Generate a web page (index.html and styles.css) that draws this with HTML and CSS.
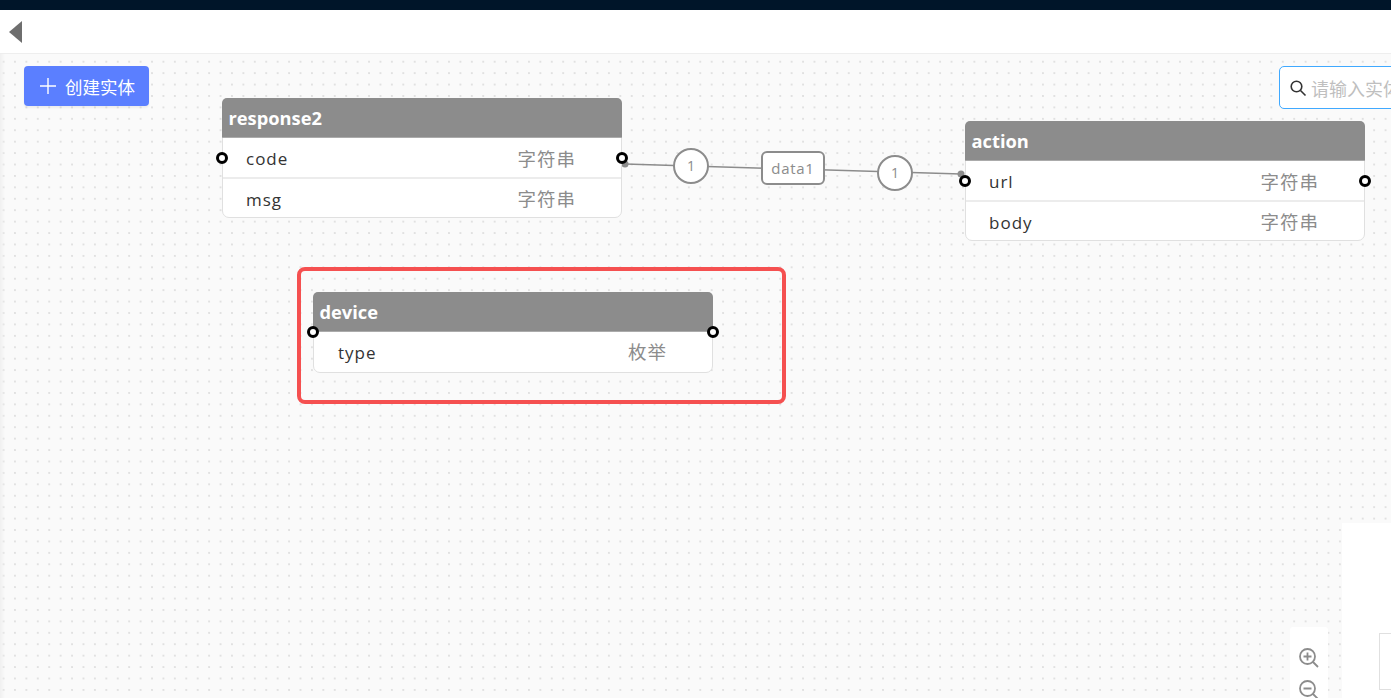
FILE: index.html
```html
<!DOCTYPE html>
<html lang="en">
<head>
  <meta charset="UTF-8">
  <title>实体关系</title>
  <link rel="stylesheet" href="styles.css">
</head>
<body>
  <div class="topbar"></div>
  <div class="header">
    <span class="back"></span>
  </div>
  <div class="canvas">
    <!-- connection between response2.code and action.url -->
    <svg class="links" width="1391" height="645">
      <line x1="625" y1="110" x2="961" y2="120"></line>
      <circle cx="625" cy="110" r="3.5"></circle>
      <circle cx="961" cy="120" r="3.5"></circle>
    </svg>

    <button class="btn-create">
      <svg width="18" height="18" viewBox="0 0 18 18"><path d="M9 1v16M1 9h16"></path></svg>
      创建实体
    </button>

    <div class="search">
      <svg width="18" height="18" viewBox="0 0 18 18"><circle cx="7.5" cy="7.5" r="5.3"></circle><path d="M11.5 11.5l5 5"></path></svg>
      <span class="search-text">请输入实体名称</span>
    </div>

    <div class="node node-response">
      <div class="node-title">response2</div>
      <div class="node-row"><span>code</span><span class="node-type">字符串</span><i class="port port-l"></i><i class="port port-r"></i></div>
      <div class="node-row"><span>msg</span><span class="node-type">字符串</span></div>
    </div>

    <div class="node node-action">
      <div class="node-title">action</div>
      <div class="node-row"><span>url</span><span class="node-type">字符串</span><i class="port port-l"></i><i class="port port-r"></i></div>
      <div class="node-row"><span>body</span><span class="node-type">字符串</span></div>
    </div>

    <div class="select-box"></div>
    <div class="node node-device">
      <div class="node-title">device<i class="port port-title-l"></i><i class="port port-title-r"></i></div>
      <div class="node-row"><span>type</span><span class="node-type">枚举</span></div>
    </div>

    <div class="badge badge-a">1</div>
    <div class="link-label">data1</div>
    <div class="badge badge-b">1</div>

    <div class="minimap"><div class="minimap-view"></div></div>
    <div class="zoom-bar">
      <svg width="22" height="22" viewBox="0 0 22 22"><circle cx="9.5" cy="9.5" r="7.5"></circle><path d="M15 15l5 5M9.5 5.5v8M5.5 9.5h8"></path></svg>
      <svg width="22" height="22" viewBox="0 0 22 22"><circle cx="9.5" cy="9.5" r="7.5"></circle><path d="M15 15l5 5M5.5 9.5h8"></path></svg>
    </div>
  </div>
</body>
</html>
```

FILE: styles.css
```css
* { margin: 0; padding: 0; box-sizing: border-box; }

html, body {
  height: 100%;
  overflow: hidden;
}

body {
  display: flex;
  flex-direction: column;
  font-family: "Open Sans", "Noto Sans CJK SC", sans-serif;
  color: #333;
}

.topbar {
  height: 10px;
  background: #001529;
}

.header {
  height: 44px;
  display: flex;
  align-items: center;
  padding-left: 9px;
  background: #fff;
  border-bottom: 1px solid #eee;
}

.back {
  width: 0;
  height: 0;
  border-style: solid;
  border-width: 11px 13px 11px 0;
  border-color: transparent #6e6e6e transparent transparent;
}

/* Canvas */
.canvas {
  position: relative;
  flex: 1;
  overflow: hidden;
  background-color: #fafafa;
  background-image: radial-gradient(circle, #d4d4d4 0.5px, transparent 1px);
  background-size: 11.43px 11.43px;
  background-position: -2.2px 2px;
}

.canvas::before {
  content: "";
  position: absolute;
  left: 0;
  top: 0;
  bottom: 0;
  width: 5px;
  background: linear-gradient(to right, #f0f0f0, transparent);
}

.links {
  position: absolute;
  left: 0;
  top: 0;
}

.links line {
  stroke: #8c8c8c;
  stroke-width: 1.5;
}

.links circle {
  fill: #8c8c8c;
}

.btn-create {
  position: absolute;
  left: 24px;
  top: 12px;
  width: 125px;
  height: 40px;
  display: flex;
  align-items: center;
  gap: 8px;
  padding-left: 15px;
  background: #5b7fff;
  border: none;
  border-radius: 4px;
  box-shadow: 0 2px 2px rgba(0, 0, 0, 0.05);
  color: #fff;
  font-family: inherit;
  font-size: 17.5px;
}

.btn-create path {
  stroke: #fff;
  stroke-width: 1.4;
  fill: none;
}

.search {
  position: absolute;
  left: 1279px;
  top: 12px;
  width: 220px;
  height: 43px;
  display: flex;
  align-items: center;
  gap: 4px;
  padding-left: 9px;
  background: #fff;
  border: 1px solid #40a9ff;
  border-radius: 5px;
}

.search svg {
  fill: none;
  stroke: #333;
  stroke-width: 1.6;
}

.search-text {
  color: #bfbfbf;
  font-size: 18px;
  white-space: nowrap;
}

/* Entity nodes */
.node {
  position: absolute;
  width: 400px;
  background: #fff;
  border: 1px solid #e0e0e0;
  border-radius: 7px;
}

.node-response { left: 222px; top: 44px; }
.node-action { left: 965px; top: 67px; }
.node-device { left: 313px; top: 238px; }

.node-title {
  position: relative;
  height: 40px;
  margin: -1px -1px 0;
  padding-left: 6.5px;
  line-height: 40px;
  background: #8c8c8c;
  border-bottom: 1px solid #ababab;
  border-radius: 5px 5px 0 0;
  color: #fff;
  font-size: 18.3px;
  font-weight: 700;
}

.node-row {
  position: relative;
  height: 41px;
  display: flex;
  align-items: center;
  justify-content: space-between;
  padding: 2px 45px 0 23px;
  border-bottom: 2px solid #ececec;
  font-size: 17px;
  letter-spacing: 1px;
}

.node-row:last-child {
  height: 38px;
  border-bottom: none;
}

.node-device .node-row {
  height: 40px;
  padding-top: 0;
  padding-left: 24px;
}

.node-type {
  color: #8c8c8c;
  font-size: 18.5px;
  letter-spacing: 1px;
  margin-top: -2px;
}

.port {
  position: absolute;
  top: 14px;
  width: 12px;
  height: 12px;
  background: #fff;
  border: 3px solid #000;
  border-radius: 50%;
}

.port-l { left: -7px; }
.port-r { right: -7px; }
.port-title-l { top: 34px; left: -6px; }
.port-title-r { top: 34px; right: -6px; }

.select-box {
  position: absolute;
  left: 297px;
  top: 213px;
  width: 489px;
  height: 137px;
  border: 4.5px solid #f55050;
  border-radius: 8px;
}

/* Link labels */
.badge {
  position: absolute;
  width: 36px;
  height: 36px;
  line-height: 31px;
  text-align: center;
  background: #fff;
  border: 2.5px solid #8c8c8c;
  border-radius: 50%;
  color: #8c8c8c;
  font-size: 14px;
}

.badge-a { left: 673px; top: 94px; }
.badge-b { left: 877px; top: 101px; }

.link-label {
  position: absolute;
  left: 761px;
  top: 97px;
  width: 64px;
  height: 34px;
  line-height: 30px;
  text-align: center;
  background: #fff;
  border: 2.5px solid #8c8c8c;
  border-radius: 6px;
  color: #8c8c8c;
  font-size: 15px;
  letter-spacing: 0.7px;
}

/* Bottom right tools */
.minimap {
  position: absolute;
  right: 0;
  bottom: 0;
  width: 49px;
  height: 175px;
  background: #fff;
}

.minimap-view {
  position: absolute;
  left: 37px;
  top: 110px;
  width: 40px;
  height: 57px;
  border: 1px solid #e0e0e0;
}

.zoom-bar {
  position: absolute;
  left: 1290px;
  top: 573px;
  width: 38px;
  height: 90px;
  display: flex;
  flex-direction: column;
  align-items: center;
  gap: 10px;
  padding-top: 20px;
  background: #fff;
  border-radius: 3px;
}

.zoom-bar svg {
  flex: none;
  fill: none;
  stroke: #8c8c8c;
  stroke-width: 1.8;
}
```
